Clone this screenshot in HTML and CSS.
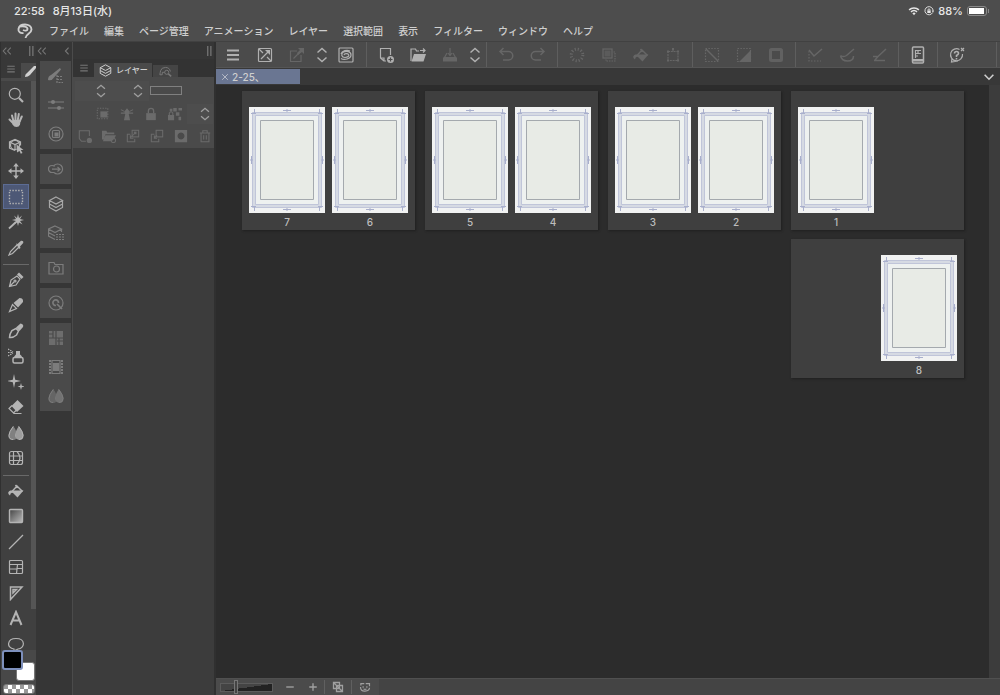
FILE: index.html
```
<!DOCTYPE html>
<html lang="ja">
	<head>
		<meta charset="utf-8">
		<title>ページ管理</title>
		<link rel="stylesheet" href="styles.css">
	</head>
	<body>
		<!-- アイコン -->
		<svg class="sprite" viewBox="0 0 16 16">
			<symbol id="logo" viewBox="0 0 16 16"><path d="M6.500 10C3.500 10.500 1 9 1.500 6C2 3 5 1.500 8 1.500C11.500 1.500 14.500 3.500 14.500 6.500C14.500 10.500 9 11 8.500 15M3 3.500C6 3 10.500 3.500 10.500 6C10.500 8 8 8 6 7" stroke-width="1.900"/></symbol>
			<symbol id="wifi" viewBox="0 0 16 16"><path d="M1.500 6.500C5 3 11 3 14.500 6.500M4 9.200C6.300 7 9.700 7 12 9.200" stroke-width="2"/><path class="f" d="M5.800 11Q8 9.300 10.200 11L8 13.500z"/></symbol>
			<symbol id="lock-rot" viewBox="0 0 16 16"><path d="M13.800 10.500A6.500 6.500 0 1 1 14.500 8M6.500 7.500V6a1.500 1.500 0 0 1 3 0v1.500" stroke-width="1.500"/><path class="f" d="M5.300 7.300h5.400v4H5.300zM12.300 7.500h3.700l-1.500 3z"/></symbol>
			<symbol id="menu" viewBox="0 0 16 16"><path d="M2 3.500h12M2 8h12M2 12.500h12" stroke-width="1.800"/></symbol>
			<symbol id="updown" viewBox="0 0 16 16"><path d="M3.500 5.500L8 1.500L12.500 5.500M3.500 10.500L8 14.500L12.500 10.500" stroke-width="1.500"/></symbol>
			<symbol id="down" viewBox="0 0 16 16"><path d="M3 5.500L8 10.500L13 5.500" stroke-width="1.800"/></symbol>
			<symbol id="dleft" viewBox="0 0 16 16"><path d="M7 2.500L2 8L7 13.500M14 2.500L9 8L14 13.500" stroke-width="1.700"/></symbol>
			<symbol id="left" viewBox="0 0 16 16"><path d="M10.500 2.500L5.500 8L10.500 13.500" stroke-width="1.800"/></symbol>
			<symbol id="grip" viewBox="0 0 16 16"><path d="M6 0v16M11 0v16" stroke-width="2"/></symbol>
			<symbol id="edit" viewBox="0 0 16 16"><rect x="1.500" y="1.500" width="13" height="13" rx="1"/><path d="M4 12L12.500 3.500M2 2l4 4M10 10l4 4"/><path class="f" d="M8 3h5v5z"/></symbol>
			<symbol id="export" viewBox="0 0 16 16"><path d="M8 4H1.500v10.500H12V8M4.500 11.500L11 5"/><path class="f" d="M9 1h6v6l-2-2-4 3-1-2 3-3z"/></symbol>
			<symbol id="clip" viewBox="0 0 16 16"><rect x="1" y="1" width="14" height="14" rx="1"/><path d="M3 11.500C6 13.500 13 12 13 8C13 4.500 8.500 3.500 5.500 5C2.500 7 3.500 10.500 7 10.500C10 10.500 11.500 9 10.500 7.500C9.500 6 6.500 6.500 6 8M3 7C4 3.500 9 2.500 12 4"/></symbol>
			<symbol id="new" viewBox="0 0 16 16"><path d="M6 14L2.500 11V1.500H12.500V8M2.500 11H6v3H8"/><circle class="f" cx="12.500" cy="12.500" r="3.500"/><path d="M12.500 10.500v4M10.500 12.500h4" stroke="#4b4b4b"/></symbol>
			<symbol id="open" viewBox="0 0 16 16"><path d="M1 14V2h4.500l1 2H9M10 3.500h5M13 1.500l2 2-2 2"/><path class="f" d="M4 7h12l-2.500 7.500H1.500z"/></symbol>
			<symbol id="save" viewBox="0 0 16 16"><path d="M5 6L2.500 10.500H13.500L11 6M8 1v7M6 6l2 2.500L10 6"/><path class="f" d="M1 10.500h14v4H1z"/></symbol>
			<symbol id="undo" viewBox="0 0 16 16"><path d="M2 4.500h8.500a4 4 0 0 1 0 8.500H5M5.500 1L2 4.500L5.500 8" stroke-width="1.500"/></symbol>
			<symbol id="redo" viewBox="0 0 16 16"><path d="M14 4.500H5.500a4 4 0 0 0 0 8.500H11M10.500 1L14 4.500L10.500 8" stroke-width="1.500"/></symbol>
			<symbol id="burst" viewBox="0 0 16 16"><circle cx="8" cy="8" r="5.800" stroke-width="3" stroke-dasharray="1.200 1.837"/></symbol>
			<symbol id="copy" viewBox="0 0 16 16"><rect x="2" y="2" width="9" height="9"/><path d="M12.500 5H14v9H5v-1.500" stroke-dasharray="1.500 1"/><path class="f" opacity=".6" d="M3.500 3.500h6v6h-6z"/></symbol>
			<symbol id="fill" viewBox="0 0 16 16"><path d="M4 8.500L9 3L14.500 8.500M9.500 5L7.500 2" stroke-width="1.500"/><path class="f" d="M3 7.500H15.500L9.500 14.500L5 10Q2.500 9 2 12.500Q-.5 11 .5 9Q1.500 7 3 7.500z"/></symbol>
			<symbol id="transform" viewBox="0 0 16 16"><rect x="3" y="4.500" width="10" height="9" stroke-dasharray="2 .8"/><path d="M8 4.500V1"/><path class="f" d="M2 3.500h2v2H2zM12 3.500h2v2h-2zM2 12.500h2v2H2zM12 12.500h2v2h-2zM7 1h2v2H7z"/></symbol>
			<symbol id="desel" viewBox="0 0 16 16"><rect x="1.500" y="1.500" width="13" height="13" stroke-dasharray="1.500 1.400"/><path d="M2 2L14 14" stroke-width="1.500"/></symbol>
			<symbol id="invert" viewBox="0 0 16 16"><rect x="1.500" y="1.500" width="13" height="13" stroke-dasharray="1.500 1.400"/><path class="f" d="M15 3v12H3z"/></symbol>
			<symbol id="border" viewBox="0 0 16 16"><rect x="2.500" y="2.500" width="11" height="11" rx="1" stroke-width="3" opacity=".8"/></symbol>
			<symbol id="snap1" viewBox="0 0 16 16"><path d="M2 4v10h12" stroke-dasharray="1.500 1.500"/><path d="M2 3l5 6L15 2" stroke-width="1.500"/></symbol>
			<symbol id="snap2" viewBox="0 0 16 16"><path d="M1.500 8.500q1 5.500 7 5.500t6-5M1.500 8.500q3 2 6 0L15 2" stroke-width="1.500"/></symbol>
			<symbol id="snap3" viewBox="0 0 16 16"><path d="M2 9.500h5M3 13.500h11M7 9.500l8-7.500M4 13l3-3.500" stroke-width="1.500"/></symbol>
			<symbol id="companion" viewBox="0 0 16 18"><rect x="2.500" y="1" width="11" height="16" rx="1" stroke-width="1.500"/><path d="M5.500 12V4M5 4.500h6M5 7.500h6M5 10h3M8 4v3" stroke-width="1.200"/><path class="f" d="M3 13h10v2.500H3z"/></symbol>
			<symbol id="help" viewBox="0 0 16 16"><path d="M10.500 2.500A6 6 0 1 0 13.500 7M9 14L2.500 15l.5-3.500M12 1l3 3M15 1l-3 3"/><path d="M5.500 6.500q0-2 2-2t2 2q0 1-2 2v1.500M7.500 11v1.500" stroke-width="1.600"/></symbol>
			<symbol id="zoomt" viewBox="0 0 16 16"><circle cx="6.800" cy="6.800" r="5.500"/><path d="M11 11L15 15" stroke-width="2.200"/></symbol>
			<symbol id="hand" viewBox="0 0 16 16"><path d="M5.500 9L4 3.500M7.500 8V1.500M9.800 8l1-6M11.800 9l2-4.500M5 11L1.500 7.500" stroke-width="2" stroke-linecap="round"/><path class="f" d="M4.500 8h8.200L12 12.500Q11 15 8.500 15Q6 15 4.500 12.500z"/></symbol>
			<symbol id="cube" viewBox="0 0 16 16"><path d="M7 12.500L1.500 10V4L7 1.500L12.500 4V7.500M1.500 4L7 6.500L12.500 4M7 6.500v6"/><circle cx="7" cy="7" r="4.500"/><path class="f" d="M8.500 6.500L15.500 12H12.800L14.500 15L12.800 15.800L11.500 13L9 14.500z"/></symbol>
			<symbol id="move" viewBox="0 0 16 16"><path d="M8 2v12M2 8h12" stroke-width="1.400"/><path class="f" d="M8 0L10.800 3.500H5.200zM8 16L10.800 12.500H5.200zM0 8L3.500 5.200v5.600zM16 8L12.500 5.200v5.600z"/></symbol>
			<symbol id="marquee" viewBox="0 0 16 16"><rect x="1.500" y="1.500" width="13" height="13" stroke-dasharray="1.400 1.490" stroke-width="1.400"/></symbol>
			<symbol id="wand" viewBox="0 0 16 16"><path d="M1 14.500L8 8" stroke-width="1.800"/><path class="f" d="M10 0l1 4 3-2.500L12 5l4 1-4 1 2.500 3.500L11 8.500 10 12l-1-3.500L5.500 10.500 8 7 4 6l4-1L6 1.500 9 4z"/></symbol>
			<symbol id="dropper" viewBox="0 0 16 16"><path d="M9 5L2.500 11.500L1 15L4.500 13.500L11 7"/><path class="f" d="M8 3.500L9.500 4L13 .8Q15.800.5 15.200 3L12 6.500L12.500 8L11 9z"/></symbol>
			<symbol id="pen" viewBox="0 0 16 16"><path d="M1.500 14.500L3 8L9 4L12 7L8 13zM1.500 14.500L6 10"/><circle cx="7" cy="9" r="1"/><path class="f" d="M9 2.500L11 .5L15.500 5L13.500 7z"/></symbol>
			<symbol id="pencil" viewBox="0 0 16 16"><path d="M1.500 14.500L4.500 7.500L8.500 11.500z"/><path class="f" d="M5.500 6L11.500 1Q15.500 1 15 5L10 10.500z"/></symbol>
			<symbol id="brush" viewBox="0 0 16 16"><path d="M1.500 14.500Q5 15 8.500 12L10.500 8L8 5.500L4 7.500Q1.500 11 1.500 14.500z" stroke-width="1.500"/><path class="f" d="M8 4.500L12.500.5Q16 1 15 4L11.500 8z"/></symbol>
			<symbol id="air" viewBox="0 0 16 16"><path d="M0 1l5 3M0 4.500h5M0 8l5-3" stroke-dasharray="1.500 1"/><rect x="5" y="9.500" width="10" height="5.500" rx="1.500" stroke-width="1.500"/><path class="f" d="M6 9Q7 7 8 6.500V3h4v3.500Q13.500 7 14 9z"/></symbol>
			<symbol id="spark" viewBox="0 0 16 16"><path class="f" d="M6 0L7.200 5.800L13 7L7.200 8.200L6 14L4.800 8.200L-1 7L4.800 5.800zM13 9l.8 2.700 2.700.8-2.700.8L13 16l-.8-2.700L9.500 12.500l2.700-.8z"/></symbol>
			<symbol id="eraser" viewBox="0 0 16 16"><path d="M4 6.500L1 9.500L5.500 14L8.500 11M5.500 14.500H13.500"/><path class="f" d="M3.500 7L9.500 1L15.500 7L9 13z"/></symbol>
			<symbol id="blur" viewBox="0 0 16 16"><path class="f" opacity=".55" d="M5.200 1Q7.500 4 8 6Q7 10 8 14Q7 15 5.200 15Q.5 15 .5 10.500Q.5 7 5.200 1z"/><path class="f" opacity=".8" d="M10.800 1Q15.500 7 15.500 10.500Q15.500 15 11 15Q7 14 7 10.500Q7 7 10.800 1z"/><path d="M5.200 1.500Q1 7 1 10.500Q1 14.500 5.200 14.500M10.800 1.500Q15 7 15 10.500Q15 14.500 11 14.500" stroke-width="1"/></symbol>
			<symbol id="mesh" viewBox="0 0 16 16"><rect x="1.500" y="1.500" width="13" height="13" rx="2"/><path d="M5.500 1.500v13M1.500 6h13M1.500 10.500h13M9 1.500Q15 8 9 14.500"/></symbol>
			<symbol id="gradient" viewBox="0 0 16 16"><rect x="1.500" y="1.500" width="13" height="13" rx="1" fill="url(#g)" stroke-width="1.400"/></symbol>
			<symbol id="line" viewBox="0 0 16 16"><path d="M1 15L15 1"/></symbol>
			<symbol id="frame" viewBox="0 0 16 16"><rect x="1.500" y="1.500" width="13" height="13" rx="1"/><path d="M1.500 5.500h13M9 9.500h5.500M9.500 5.500l-1 9M1.500 10H9"/></symbol>
			<symbol id="ruler" viewBox="0 0 16 16"><path d="M2.500 2H14L2.500 14.500zM5 4.500v3.500L8.500 4.500z" stroke-width="1.500"/></symbol>
			<symbol id="text" viewBox="0 0 16 16"><path d="M2.500 15L8 2L13.500 15M4.500 10.500h7" stroke-width="2"/></symbol>
			<symbol id="balloon" viewBox="0 0 16 16"><path d="M8 2.500c10 0 9 10 2 10.500L6 15V13C-2 12-1 2.500 8 2.500z"/></symbol>
			<symbol id="tip" viewBox="0 0 16 16"><path class="f" d="M5 14Q5 11 7 10L14 3L16 3V5L10 12Q8 14 5 14z"/></symbol>
			<symbol id="subtool" viewBox="0 0 16 16"><path d="M9 7v7.500h6M9 8.500h6M9 11.500h6" stroke-dasharray="2 1"/><path class="f" d="M0 12Q0 8 3 7L12 0L13 1.500L6 9.500Q4 13 0 12z"/></symbol>
			<symbol id="sliders" viewBox="0 0 16 16"><path d="M0 5h16M0 11h16"/><circle class="f" cx="5" cy="5" r="2"/><circle class="f" cx="11" cy="11" r="2"/></symbol>
			<symbol id="size" viewBox="0 0 16 16"><circle cx="8" cy="8" r="7"/><rect x="4.500" y="4.500" width="7" height="7" rx="1"/><path class="f" d="M6.500 6.500h4v4h-4z"/></symbol>
			<symbol id="cloud" viewBox="0 0 16 16"><path d="M6 11.500H4a3.500 3.500 0 0 1 0-7Q6 4.500 6.500 5.500M6 4.500A5 5 0 1 1 6 11.500M4 8.200h8M9.500 6L12 8.200L9.500 10.500"/></symbol>
			<symbol id="layers" viewBox="0 0 16 16"><path d="M8 1L14.500 4.500L8 8L1.500 4.500zM1.500 4.500V8L8 11.500L14.500 8V4.500M1.500 8v3.500L8 15L14.500 11.500V8"/></symbol>
			<symbol id="layerprop" viewBox="0 0 16 16"><path d="M7 1L13.500 4L7 7.500L.5 4zM.5 4v3.500L7 11M13.500 4v3M.5 7.500V11L7 14.500"/><path d="M8 9.500h8M8 12h8M8 14.500h8" stroke-dasharray="2 1"/></symbol>
			<symbol id="folder" viewBox="0 0 16 16"><path d="M1 14V2.500h5l1 2h8V14z"/><circle cx="8.500" cy="9" r="3"/></symbol>
			<symbol id="quick" viewBox="0 0 16 16"><circle cx="8" cy="8" r="7"/><path d="M10.500 8A2.800 2.800 0 1 0 8 10.500M9 9l5 5" stroke-width="1.700"/></symbol>
			<symbol id="material" viewBox="0 0 16 16"><path class="f" opacity=".7" d="M1 1h14v14H1z"/><path stroke="#4a4a4a" d="M8 1v14M1 8h14M11 8v7M5 1v7M1 4h4M9 11h6"/></symbol>
			<symbol id="film" viewBox="0 0 16 16"><path d="M2 1v14M14 1v14" stroke-dasharray="2 1" stroke-width="2"/><path d="M4 1.500h8v13H4z"/><path class="f" d="M5 4h6v8H5z"/></symbol>
			<symbol id="search" viewBox="0 0 16 16"><path d="M1 12Q1.500 9 2 7Q3 3 8 3Q13 3 14 8M1 12h3V9h3"/><circle cx="9.500" cy="9" r="2.500"/><path d="M11.500 11l3.500 3" stroke-width="2"/></symbol>
			<symbol id="cliplayer" viewBox="0 0 16 16"><rect x="1.500" y="1.500" width="12" height="12" stroke-dasharray="1.500 1.500"/><path class="f" d="M5 5h8v7H5z"/></symbol>
			<symbol id="tower" viewBox="0 0 16 16"><path d="M1 3l4 2M15 3l-4 2M1 7h4M15 7h-4"/><path class="f" d="M5 5L8 1.500L11 5V8H10l1.500 7h-7L6 8H5z"/></symbol>
			<symbol id="lock" viewBox="0 0 16 16"><path d="M5 7V4.500a3 3 0 0 1 6 0V7" stroke-width="1.500"/><path class="f" d="M2.500 7h11v8h-11z"/></symbol>
			<symbol id="alphalock" viewBox="0 0 16 16"><path class="f" d="M6 1h4v4H6zM12 1h4v3h-4zM9 6h4v4H9zM12 11h3v4h-3zM0 9h7v6H0zM2 2h3v3H2z"/><path d="M1.500 9V7Q3.500 4 5.500 7v2"/></symbol>
			<symbol id="addlayer" viewBox="0 0 16 16"><path d="M13 8V2H1.500V11L4 14H9"/><circle class="f" cx="13" cy="13" r="3"/></symbol>
			<symbol id="addfolder" viewBox="0 0 16 16"><path class="f" d="M0 2h5l1 2h8v2H4L2 12H0zM4 7h12l-2 4-3 3H1z"/><circle cx="13" cy="13" r="2.500"/></symbol>
			<symbol id="transfer" viewBox="0 0 16 16"><rect x="7" y="1.500" width="7.500" height="7.500"/><path d="M5 6H1.500v8.500H10V11M11 4L5 10M5 7v3.500h3.500"/><path class="f" d="M9 3h3v3H9z"/></symbol>
			<symbol id="merge" viewBox="0 0 16 16"><rect x="7" y="1.500" width="7.500" height="7.500"/><path d="M5 6H1.500v8.500H10V11M8 7l-3 3.500M5 7.500v3h3"/></symbol>
			<symbol id="mask" viewBox="0 0 16 16"><path class="f" fill-rule="evenodd" d="M1 1h14v14H1zM8 4a4 4 0 1 0 .01 0z"/></symbol>
			<symbol id="trash" viewBox="0 0 16 16"><path d="M2 4.500h12M5.500 4V2h5v2M3.500 4.500v10h9v-10M6.500 7v5M9.500 7v5"/></symbol>
			<symbol id="close" viewBox="0 0 16 16"><path d="M3.500 3.500L12.500 12.500M12.500 3.500L3.500 12.500" stroke-width="1.600"/></symbol>
			<symbol id="minus" viewBox="0 0 16 16"><path d="M3 8h10" stroke-width="1.800"/></symbol>
			<symbol id="plus" viewBox="0 0 16 16"><path d="M3 8h10M8 3v10" stroke-width="1.800"/></symbol>
			<symbol id="fit" viewBox="0 0 16 16"><path d="M2 2h8v8H2zM6 6h8v8H6zM3 3l10 10" stroke-width="1.700"/></symbol>
			<symbol id="rotate" viewBox="0 0 16 16"><path d="M2.500 6V3.500H7M9 3.500h5V7M14 9q0 4-6 4.500T2 8M5.500 7v2M10.500 7v2M6 10.500q2 1.500 4 0" stroke-width="1.600"/></symbol>
			<!-- 原稿用紙 -->
			<symbol id="sheet" viewBox="0 0 76 106">
				<path fill="#f1f2f2" stroke="none" d="M0 0h76v106H0z"/>
				<path fill="#eef1f0" stroke="#d6dae3" stroke-width="3" d="M5 7h66v92H5z"/>
				<path fill="none" stroke="#b8bdd4" stroke-width=".8" d="M3.500 5.500h69v95h-69zM6.500 8.500h63v89h-63z"/>
				<path fill="#e8ebe6" stroke="#a4a9ae" d="M11.500 13.500h53v79h-53z"/>
				<path fill="none" stroke="#a9afcc" stroke-width="1" d="M5.500 2v5M70.500 2v5M5.500 99v5M70.500 99v5M2 6.500h5M69 6.500h5M2 99.500h5M69 99.500h5M34 3.500h8M34 102.500h8M2.500 49v8M73.500 49v8M38 2v3M38 101v3M1 53h3M72 53h3"/>
			</symbol>
			<linearGradient id="g" x1="0" y1="0" x2="1" y2="1"><stop offset="0" stop-color="#444"/><stop offset="1" stop-color="#bbb"/></linearGradient>
		</svg>

		<header class="top">
			<div class="status">
				<span>22:58</span>
				<span>8月13日(水)</span>
				<div class="battery-info">
					<svg class="icon"><use href="#wifi"/></svg>
					<svg class="icon small"><use href="#lock-rot"/></svg>
					<span>88%</span>
					<span class="battery"></span>
				</div>
			</div>
			<nav class="menubar">
				<button class="logo" aria-label="CLIP STUDIO"><svg class="icon"><use href="#logo"/></svg></button>
				<button>ファイル</button>
				<button>編集</button>
				<button>ページ管理</button>
				<button>アニメーション</button>
				<button>レイヤー</button>
				<button>選択範囲</button>
				<button>表示</button>
				<button>フィルター</button>
				<button>ウィンドウ</button>
				<button>ヘルプ</button>
			</nav>
		</header>

		<div class="workspace">
			<!-- ツール -->
			<aside class="tools">
				<div class="strip">
					<svg class="icon small"><use href="#dleft"/></svg>
					<svg class="icon small"><use href="#grip"/></svg>
				</div>
				<div class="tool-tabs">
					<svg class="icon small"><use href="#menu"/></svg>
					<span class="tool-tab"><svg class="icon"><use href="#tip"/></svg></span>
				</div>
				<div class="tool-list">
					<div class="tool-group">
						<button aria-label="虫めがね"><svg class="icon"><use href="#zoomt"/></svg></button>
						<button aria-label="移動"><svg class="icon"><use href="#hand"/></svg></button>
						<button aria-label="操作"><svg class="icon"><use href="#cube"/></svg></button>
						<button aria-label="レイヤー移動"><svg class="icon"><use href="#move"/></svg></button>
						<button class="cur" aria-label="選択範囲"><svg class="icon"><use href="#marquee"/></svg></button>
						<button aria-label="自動選択"><svg class="icon"><use href="#wand"/></svg></button>
						<button aria-label="スポイト"><svg class="icon"><use href="#dropper"/></svg></button>
					</div>
					<div class="tool-group">
						<button aria-label="ペン"><svg class="icon"><use href="#pen"/></svg></button>
						<button aria-label="鉛筆"><svg class="icon"><use href="#pencil"/></svg></button>
						<button aria-label="筆"><svg class="icon"><use href="#brush"/></svg></button>
						<button aria-label="エアブラシ"><svg class="icon"><use href="#air"/></svg></button>
						<button aria-label="デコレーション"><svg class="icon"><use href="#spark"/></svg></button>
						<button aria-label="消しゴム"><svg class="icon"><use href="#eraser"/></svg></button>
						<button aria-label="色混ぜ"><svg class="icon"><use href="#blur"/></svg></button>
						<button aria-label="ゆがみ"><svg class="icon"><use href="#mesh"/></svg></button>
					</div>
					<div class="tool-group">
						<button aria-label="塗りつぶし"><svg class="icon"><use href="#fill"/></svg></button>
						<button aria-label="グラデーション"><svg class="icon"><use href="#gradient"/></svg></button>
						<button aria-label="図形"><svg class="icon"><use href="#line"/></svg></button>
						<button aria-label="コマ枠"><svg class="icon"><use href="#frame"/></svg></button>
						<button aria-label="定規"><svg class="icon"><use href="#ruler"/></svg></button>
						<button aria-label="テキスト"><svg class="icon"><use href="#text"/></svg></button>
						<button aria-label="フキダシ"><svg class="icon"><use href="#balloon"/></svg></button>
					</div>
				</div>
				<div class="colors">
					<button class="sub-color" aria-label="サブカラー"></button>
					<button class="main-color" aria-label="メインカラー"></button>
					<button class="clear-color" aria-label="透明色"></button>
				</div>
			</aside>

			<!-- パレットドック -->
			<aside class="dock">
				<div class="strip">
					<svg class="icon small"><use href="#dleft"/></svg>
					<svg class="icon small"><use href="#left"/></svg>
				</div>
				<div class="dock-list">
					<div class="dock-group">
						<button aria-label="サブツール"><svg class="icon"><use href="#subtool"/></svg></button>
						<button aria-label="ツールプロパティ"><svg class="icon"><use href="#sliders"/></svg></button>
						<button aria-label="ブラシサイズ"><svg class="icon"><use href="#size"/></svg></button>
					</div>
					<div class="dock-group">
						<button aria-label="素材"><svg class="icon"><use href="#cloud"/></svg></button>
					</div>
					<div class="dock-group">
						<button class="on" aria-label="レイヤー"><svg class="icon"><use href="#layers"/></svg></button>
						<button aria-label="レイヤープロパティ"><svg class="icon"><use href="#layerprop"/></svg></button>
					</div>
					<div class="dock-group">
						<button aria-label="素材フォルダー"><svg class="icon"><use href="#folder"/></svg></button>
					</div>
					<div class="dock-group">
						<button aria-label="クイックアクセス"><svg class="icon"><use href="#quick"/></svg></button>
					</div>
					<div class="dock-group">
						<button aria-label="カラーセット"><svg class="icon"><use href="#material"/></svg></button>
						<button aria-label="タイムライン"><svg class="icon"><use href="#film"/></svg></button>
						<button aria-label="色混ぜパレット"><svg class="icon"><use href="#blur"/></svg></button>
					</div>
				</div>
			</aside>

			<!-- レイヤー -->
			<aside class="layers">
				<div class="strip end">
					<svg class="icon small"><use href="#grip"/></svg>
				</div>
				<div class="layer-tabs">
					<svg class="icon small"><use href="#menu"/></svg>
					<button class="on"><svg class="icon"><use href="#layers"/></svg>レイヤー</button>
					<button aria-label="レイヤー検索"><svg class="icon"><use href="#search"/></svg></button>
				</div>
				<div class="layer-panel">
					<div class="row blend">
						<button class="spin" aria-label="合成モード"><svg class="icon"><use href="#updown"/></svg></button>
						<button class="spin" aria-label="不透明度"><svg class="icon"><use href="#updown"/></svg></button>
						<input type="text" class="opacity" aria-label="不透明度の値">
					</div>
					<div class="row locks">
						<button aria-label="クリッピング"><svg class="icon"><use href="#cliplayer"/></svg></button>
						<button aria-label="参照レイヤー"><svg class="icon"><use href="#tower"/></svg></button>
						<button aria-label="ロック"><svg class="icon"><use href="#lock"/></svg></button>
						<button aria-label="透明ピクセルをロック"><svg class="icon"><use href="#alphalock"/></svg></button>
						<button class="spin" aria-label="マスク"><svg class="icon"><use href="#updown"/></svg></button>
					</div>
					<div class="row">
						<button aria-label="新規レイヤー"><svg class="icon"><use href="#addlayer"/></svg></button>
						<button aria-label="新規フォルダー"><svg class="icon"><use href="#addfolder"/></svg></button>
						<button aria-label="下に転写"><svg class="icon"><use href="#transfer"/></svg></button>
						<button aria-label="下に結合"><svg class="icon"><use href="#merge"/></svg></button>
						<button aria-label="マスク作成"><svg class="icon"><use href="#mask"/></svg></button>
						<button aria-label="削除"><svg class="icon"><use href="#trash"/></svg></button>
					</div>
				</div>
			</aside>

			<main>
				<div class="commandbar">
					<div class="group">
						<button class="on" aria-label="メニュー"><svg class="icon"><use href="#menu"/></svg></button>
						<button class="on" aria-label="ページ編集"><svg class="icon"><use href="#edit"/></svg></button>
						<button aria-label="共有"><svg class="icon"><use href="#export"/></svg></button>
						<button class="on narrow" aria-label="切り替え"><svg class="icon"><use href="#updown"/></svg></button>
						<button class="on" aria-label="CLIP STUDIOを開く"><svg class="icon"><use href="#clip"/></svg></button>
					</div>
					<div class="group">
						<button class="on" aria-label="新規"><svg class="icon"><use href="#new"/></svg></button>
						<button class="on" aria-label="開く"><svg class="icon"><use href="#open"/></svg></button>
						<button aria-label="保存"><svg class="icon"><use href="#save"/></svg></button>
						<button class="on narrow" aria-label="切り替え"><svg class="icon"><use href="#updown"/></svg></button>
					</div>
					<div class="group">
						<button aria-label="取り消し"><svg class="icon"><use href="#undo"/></svg></button>
						<button aria-label="やり直し"><svg class="icon"><use href="#redo"/></svg></button>
					</div>
					<div class="group">
						<button aria-label="消去"><svg class="icon"><use href="#burst"/></svg></button>
						<button aria-label="選択範囲外を消去"><svg class="icon"><use href="#copy"/></svg></button>
						<button aria-label="塗りつぶし"><svg class="icon"><use href="#fill"/></svg></button>
						<button aria-label="拡大・縮小・回転"><svg class="icon"><use href="#transform"/></svg></button>
					</div>
					<div class="group">
						<button aria-label="選択を解除"><svg class="icon"><use href="#desel"/></svg></button>
						<button aria-label="選択範囲を反転"><svg class="icon"><use href="#invert"/></svg></button>
						<button aria-label="境界線"><svg class="icon"><use href="#border"/></svg></button>
					</div>
					<div class="group">
						<button aria-label="定規にスナップ"><svg class="icon"><use href="#snap1"/></svg></button>
						<button aria-label="特殊定規にスナップ"><svg class="icon"><use href="#snap2"/></svg></button>
						<button aria-label="グリッドにスナップ"><svg class="icon"><use href="#snap3"/></svg></button>
					</div>
					<div class="group">
						<button class="on" aria-label="コンパニオンモード"><svg class="icon tall"><use href="#companion"/></svg></button>
					</div>
					<div class="group last">
						<button class="on" aria-label="サポート"><svg class="icon"><use href="#help"/></svg></button>
					</div>
				</div>
				<div class="doc-tabs">
					<button class="doc-tab"><svg class="icon small"><use href="#close"/></svg>2-25、</button>
					<button class="more" aria-label="タブ一覧"><svg class="icon"><use href="#down"/></svg></button>
				</div>
				<div class="canvas">
					<div class="spreads">
						<div class="spread">
							<figure><svg class="sheet"><use href="#sheet"/></svg><figcaption>1</figcaption></figure>
						</div>
						<div class="spread">
							<figure><svg class="sheet"><use href="#sheet"/></svg><figcaption>3</figcaption></figure>
							<figure><svg class="sheet"><use href="#sheet"/></svg><figcaption>2</figcaption></figure>
						</div>
						<div class="spread">
							<figure><svg class="sheet"><use href="#sheet"/></svg><figcaption>5</figcaption></figure>
							<figure><svg class="sheet"><use href="#sheet"/></svg><figcaption>4</figcaption></figure>
						</div>
						<div class="spread">
							<figure><svg class="sheet"><use href="#sheet"/></svg><figcaption>7</figcaption></figure>
							<figure><svg class="sheet"><use href="#sheet"/></svg><figcaption>6</figcaption></figure>
						</div>
						<div class="spread right">
							<figure><svg class="sheet"><use href="#sheet"/></svg><figcaption>8</figcaption></figure>
						</div>
					</div>
					<div class="scrollbar"></div>
				</div>
				<div class="footer">
					<input type="range" min="0" max="100" value="28" aria-label="表示倍率">
					<button aria-label="縮小"><svg class="icon"><use href="#minus"/></svg></button>
					<button aria-label="拡大"><svg class="icon"><use href="#plus"/></svg></button>
					<button class="sep" aria-label="全体表示"><svg class="icon"><use href="#fit"/></svg></button>
					<button class="sep" aria-label="回転"><svg class="icon"><use href="#rotate"/></svg></button>
				</div>
			</main>
		</div>
	</body>
</html>
```

FILE: styles.css
```
*{
	box-sizing: border-box;
}
body,figure{
	margin: 0;
	padding: 0;
}
body{
	display: flex;
	flex-direction: column;
	height: 100vh;
	overflow: hidden;
	background-color: #383838;
	color: #cfcfcf;
	font: 500 10px/14px Inter, "Noto Sans CJK JP", sans-serif;
}
button{
	display: flex;
	align-items: center;
	justify-content: center;
	flex: none;
	margin: 0;
	padding: 0;
	border: 0;
	background: none;
	color: inherit;
	font: inherit;
}
.sprite{
	position: absolute;
	width: 0;
	height: 0;
}
.icon{
	display: block;
	flex: none;
	width: 16px;
	height: 16px;
	fill: none;
	stroke: currentColor;
	stroke-width: 1.2;
}
.icon.small{
	width: 10px;
	height: 10px;
}
.f{
	fill: currentColor;
	stroke: none;
}

/* ヘッダー */
.top{
	flex: none;
	background-color: #4d4d4d;
	border-bottom: 1px solid #414141;
}
.status{
	display: flex;
	align-items: center;
	gap: 8px;
	height: 21px;
	padding: 0 13px 0 14px;
	color: #e6e6e6;
	font-size: 11px;
}
.battery-info{
	display: flex;
	align-items: center;
	gap: 4px;
	margin-left: auto;
}
.battery-info .icon{
	width: 12px;
	height: 12px;
}
.battery-info .icon.small{
	width: 10px;
	height: 10px;
}
.battery{
	position: relative;
	width: 20px;
	height: 10px;
	border: 1px solid #8a8a8a;
	border-radius: 3px;
	background: linear-gradient(#fff, #fff) 1px 1px / 15px 6px no-repeat;
}
.battery::after{
	content: "";
	position: absolute;
	left: 20px;
	top: 2px;
	width: 1px;
	height: 4px;
	background-color: #8a8a8a;
}
.menubar{
	display: flex;
	align-items: center;
	gap: 15px;
	height: 20px;
	padding-left: 16px;
}
.menubar .logo{
	width: 18px;
}

/* 左パレット */
.workspace{
	display: flex;
	flex: 1;
	min-height: 0;
}
.strip{
	display: flex;
	align-items: center;
	justify-content: space-between;
	flex: none;
	height: 17px;
	padding: 0 0 0 1px;
	color: #777;
}
.strip.end{
	justify-content: flex-end;
}
.tools{
	display: flex;
	flex-direction: column;
	flex: none;
	width: 36px;
	border-left: 1px solid #303030;
}
.tool-tabs{
	display: flex;
	align-items: center;
	flex: none;
	height: 22px;
	padding-left: 5px;
	border-bottom: 3px solid #4a4a4a;
	color: #777;
}
.tool-tab{
	display: flex;
	align-items: center;
	justify-content: flex-end;
	align-self: flex-end;
	width: 15px;
	height: 15px;
	margin-left: 5px;
	overflow: hidden;
	background-color: #4a4a4a;
	color: #d0d0d0;
}
.tool-list{
	flex: 1;
	min-height: 0;
	overflow: hidden;
	padding: 1px 0 0 2px;
	background: linear-gradient(#555, #555) right top / 5px 528px no-repeat #404040;
	color: #b4b4b4;
}
.tool-group{
	width: 26px;
}
.tool-group + .tool-group{
	margin-top: 4px;
	padding-top: 2px;
	border-top: 1px solid #696969;
}
.tool-group button{
	width: 26px;
	height: 25px;
}
.tool-group button:nth-child(even){
	height: 26px;
}
.tool-group .cur{
	border: 1px solid #5c6c94;
	background-color: #4d5876;
}
.colors{
	position: relative;
	flex: none;
	height: 45px;
	background-color: #484848;
}
.colors button{
	position: absolute;
	border-radius: 3px;
}
.main-color{
	left: 1px;
	top: 0;
	width: 21px;
	height: 20px;
	border: 2px solid #7d8fbb;
	background-color: #000;
}
.sub-color{
	left: 15px;
	top: 12px;
	width: 19px;
	height: 19px;
	border: 1px solid #777;
	background-color: #fff;
}
.clear-color{
	left: 2px;
	top: 34px;
	width: 32px;
	height: 10px;
	border: 1px solid #777;
	background: repeating-conic-gradient(#fff 0 25%, #999 0 50%) 0 0 / 8px 8px;
}

.dock{
	flex: none;
	width: 36px;
	background-color: #363636;
}
.dock-list{
	display: flex;
	flex-direction: column;
	gap: 5px;
	padding: 2px 1px 0 4px;
	color: #7c7c7c;
}
.dock-group{
	padding-bottom: 1px;
	background-color: #4a4a4a;
}
.dock-group button{
	width: 31px;
	height: 29px;
}
.dock-group .on{
	color: #a8a8a8;
}

.layers{
	flex: none;
	width: 144px;
	border-left: 1px solid #4b4b4b;
	border-right: 2px solid #303030;
	background-color: #3c3c3c;
}
.layers .strip{
	background-color: #363636;
}
.layer-tabs{
	display: flex;
	align-items: flex-end;
	height: 18px;
	padding-left: 6px;
	background-color: #333;
	color: #777;
}
.layer-tabs > .icon{
	align-self: center;
	margin-right: 5px;
}
.layer-tabs button{
	gap: 4px;
	height: 12px;
	padding: 0 6px;
	background-color: #454545;
}
.layer-tabs .icon{
	width: 13px;
	height: 13px;
}
.layer-tabs > .icon.small{
	width: 10px;
	height: 10px;
}
.layer-tabs .on{
	height: 14px;
	padding: 0 4px 0 5px;
	margin-right: 1px;
	background-color: #4a4a4a;
	color: #cfcfcf;
	font-size: 8px;
}
.layer-panel{
	background-color: #4a4a4a;
	color: #6b6b6b;
}
.row{
	display: flex;
	align-items: center;
	height: 24px;
}
.row button{
	width: 24px;
	height: 20px;
}
.row .icon{
	width: 14px;
	height: 14px;
}
.row .spin{
	color: #a0a0a0;
	background-color: #4d4d4d;
}
.blend{
	height: 27px;
	padding-left: 2px;
}
.blend .spin{
	width: 37px;
	padding-left: 14px;
}
.opacity{
	width: 32px;
	height: 9px;
	padding: 0;
	margin-left: 1px;
	border: 1px solid #808080;
	background: none;
}
.locks{
	height: 20px;
	padding-left: 18px;
}
.locks .spin{
	width: 26px;
	padding-left: 10px;
}

/* メイン */
main{
	display: flex;
	flex-direction: column;
	flex: 1;
	min-width: 0;
}
.commandbar{
	display: flex;
	flex: none;
	height: 26px;
	padding-right: 3px;
	background-color: #4b4b4b;
	border-bottom: 1px solid #555;
	color: #666;
}
.group{
	display: flex;
	align-items: center;
	padding: 0 3px;
	border-right: 1px solid #5e5e5e;
}
.group:first-child{
	padding: 0 4px 0 1px;
}
.group.last{
	flex: 1;
}
.group button{
	width: 32px;
	height: 25px;
}
.group .narrow{
	width: 17px;
}
.group .on{
	color: #b0b0b0;
}
.icon.tall{
	height: 18px;
}
.doc-tabs{
	display: flex;
	justify-content: space-between;
	flex: none;
	height: 17px;
}
.doc-tab{
	justify-content: flex-start;
	gap: 2px;
	width: 84px;
	height: 15px;
	margin-top: 1px;
	padding-left: 4px;
	background-color: #6a7692;
}
.doc-tab .icon{
	color: #b4b9c6;
}
.more{
	width: 22px;
}
.more .icon{
	width: 14px;
	height: 14px;
}
.canvas{
	display: flex;
	flex: 1;
	min-height: 0;
	background-color: #2c2c2c;
}
.spreads{
	display: flex;
	flex: 1;
	flex-flow: row-reverse wrap;
	align-content: flex-start;
	gap: 9px 10px;
	padding: 6px 25px 0 16px;
	overflow: hidden;
}
.spread{
	display: flex;
	gap: 7px;
	width: 173px;
	padding: 16px 7px 0;
	background-color: #3f3f3f;
	box-shadow: 1px 1px 2px #1f1f1f;
}
.spread.right{
	justify-content: flex-end;
}
.sheet{
	display: block;
	width: 76px;
	height: 106px;
}
figcaption{
	height: 17px;
	color: #bdbdbd;
	line-height: 18px;
	text-align: center;
}
.scrollbar{
	width: 11px;
	background-color: #3c3c3c;
}
.footer{
	display: flex;
	align-items: center;
	flex: none;
	height: 17px;
	padding-left: 4px;
	background: linear-gradient(#4b4b4b, #4b4b4b) left / 163px 100% no-repeat #444;
	border-top: 1px solid #505050;
	color: #a0a0a0;
}
.footer button{
	width: 23px;
	height: 14px;
}
.footer .icon{
	width: 12px;
	height: 12px;
}
.footer .sep{
	width: 27px;
	border-left: 1px solid #606060;
}
.footer input{
	appearance: none;
	width: 53px;
	height: 9px;
	margin: 0 5px 0 0;
	border: 1px solid #5c5c5c;
	background: linear-gradient(to bottom right, #444 50%, #222 50%);
}
.footer input::-webkit-slider-thumb{
	appearance: none;
	width: 4px;
	height: 14px;
	border: 1px solid #777;
	background-color: #444;
}
```
